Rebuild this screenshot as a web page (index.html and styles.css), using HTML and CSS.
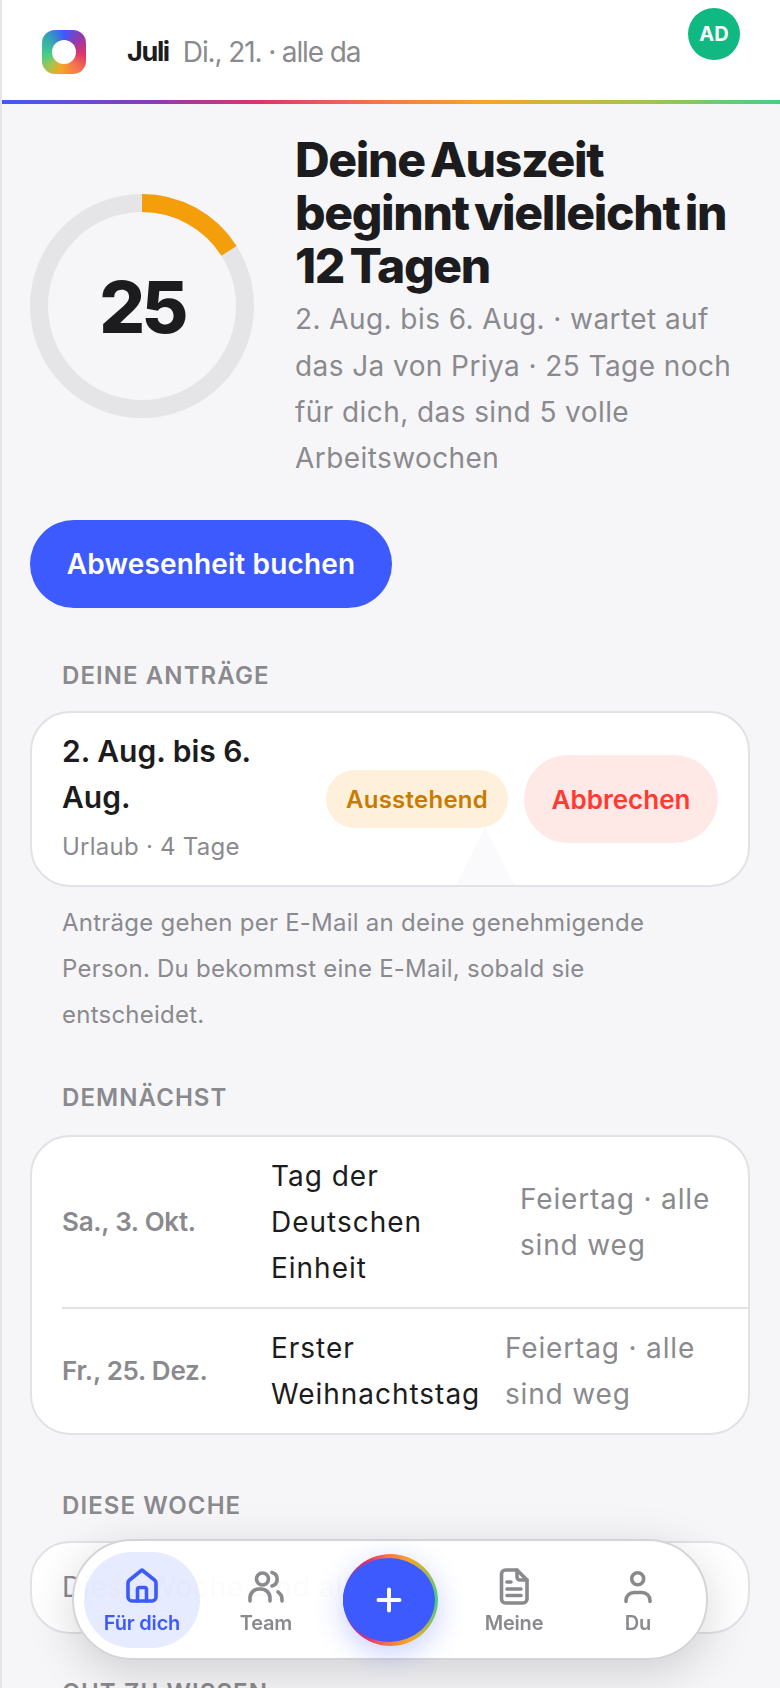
FILE: index.html
```html
<!DOCTYPE html>
<html lang="de">
<head>
<meta charset="utf-8">
<title>Für dich</title>
<link rel="stylesheet" href="styles.css">
</head>
<body>
<div class="app">
  <header class="topbar">
    <div class="logo"><span class="logo-hole"></span></div>
    <div class="crumb"><strong>Juli</strong><span>Di., 21. · alle da</span></div>
    <div class="avatar">AD</div>
  </header>
  <div class="rainbow"></div>
  <main class="content">
    <section class="hero">
      <div class="ring">
        <svg viewBox="0 0 224 224" width="224" height="224">
          <circle cx="112" cy="112" r="103" fill="none" stroke="#e5e5e7" stroke-width="18"/>
          <circle cx="112" cy="112" r="103" fill="none" stroke="#f59e0b" stroke-width="18" pathLength="100" stroke-dasharray="16 84" transform="rotate(-90 112 112)"/>
        </svg>
        <span class="ring-num">25</span>
      </div>
      <div class="hero-text">
        <h1>Deine Auszeit beginnt vielleicht in 12 Tagen</h1>
        <p>2. Aug. bis 6. Aug. · wartet auf das Ja von Priya · 25 Tage noch für dich, das sind 5 volle Arbeitswochen</p>
      </div>
    </section>
    <button class="primary">Abwesenheit buchen</button>

    <h2 class="label label-first">DEINE ANTRÄGE</h2>
    <div class="card request">
      <div class="req-text">
        <div class="req-title">2. Aug. bis 6. Aug.</div>
        <div class="req-sub">Urlaub · 4 Tage</div>
      </div>
      <span class="pill">Ausstehend</span>
      <button class="cancel">Abbrechen</button>
      <span class="ghost"></span>
    </div>
    <p class="note">Anträge gehen per E-Mail an deine genehmigende Person. Du bekommst eine E-Mail, sobald sie entscheidet.</p>

    <h2 class="label label-soon">DEMNÄCHST</h2>
    <div class="card">
      <div class="row row-a">
        <div class="date">Sa., 3. Okt.</div>
        <div class="name">Tag der Deutschen Einheit</div>
        <div class="meta">Feiertag · alle sind weg</div>
      </div>
      <div class="row row-b">
        <div class="date">Fr., 25. Dez.</div>
        <div class="name">Erster Weihnachtstag</div>
        <div class="meta">Feiertag · alle sind weg</div>
      </div>
    </div>

    <h2 class="label label-week">DIESE WOCHE</h2>
    <div class="card week">Diese Woche sind alle da.</div>

    <h2 class="label label-tips">GUT ZU WISSEN</h2>
  </main>

  <nav class="tabbar">
    <a class="tab active">
      <svg viewBox="0 0 44 44"><path d="M22 5 34.500 15q1.500 1.200 1.500 3v14a4 4 0 0 1-4 4H12a4 4 0 0 1-4-4V18q0-1.800 1.500-3z"/><path d="M17.500 36V24.500a2 2 0 0 1 2-2h5a2 2 0 0 1 2 2V36"/></svg>
      <span>Für dich</span>
    </a>
    <a class="tab">
      <svg viewBox="0 0 44 44"><circle cx="18.500" cy="14" r="6"/><path d="M6 36v-3a9 9 0 0 1 9-9h2a9 9 0 0 1 9 9v3"/><path d="M28 7.500a7 7 0 0 1 0 13.500"/><path d="M34 27a9 9 0 0 1 4 8v1"/></svg>
      <span>Team</span>
    </a>
    <div class="fab-slot">
      <button class="fab"><span class="fab-core"><svg viewBox="0 0 24 24"><path d="M12 3v18M3 12h18"/></svg></span></button>
    </div>
    <a class="tab">
      <svg viewBox="0 0 44 44"><path d="M13.500 5H25l10 10v19a4 4 0 0 1-4 4H13.500a4 4 0 0 1-4-4V9a4 4 0 0 1 4-4z"/><path d="M25 5v7a3 3 0 0 0 3 3h7"/><path d="M15 17h4M15 24h14M15 30.500h14"/></svg>
      <span>Meine</span>
    </a>
    <a class="tab">
      <svg viewBox="0 0 44 44"><circle cx="21.700" cy="13.700" r="6"/><path d="M10 36.500v-1a8 8 0 0 1 8-8h8a8 8 0 0 1 8 8v1"/></svg>
      <span>Du</span>
    </a>
  </nav>
</div>
</body>
</html>
```

FILE: styles.css
```css
* { box-sizing: border-box; }
html, body { margin: 0; padding: 0; }
body {
  background: #f6f6f9;
  font-family: "Inter", "Noto Sans", sans-serif;
  color: #1c1c1e;
}
.app {
  min-height: 100vh;
  border-left: 2px solid #e5e5e7;
}
.topbar {
  display: flex;
  align-items: flex-start;
  height: 100px;
  background: #fff;
  padding: 8px 40px 0 40px;
}
.logo {
  width: 44px;
  height: 44px;
  margin-top: 22px;
  border-radius: 13px;
  background: conic-gradient(#3d5afe 0deg, #8e3bb0 45deg, #e0336b 95deg, #f5734f 140deg, #f5a623 190deg, #a8c34f 225deg, #45cf87 260deg, #36a6b0 310deg, #3d5afe 360deg);
  display: flex;
  align-items: center;
  justify-content: center;
}
.logo-hole {
  width: 24px;
  height: 24px;
  border-radius: 50%;
  background: #fff;
}
.crumb {
  margin: 20px 0 0 41px;
  display: flex;
  gap: 14px;
  font-size: 28px;
  line-height: 48px;
  letter-spacing: -0.04em;
  flex: 1;
}
.crumb strong { font-weight: 700; color: #1c1c1e; font-size: 27px; letter-spacing: -0.05em; }
.crumb span { color: #8a8a8e; }
.avatar {
  width: 52px;
  height: 52px;
  border-radius: 50%;
  background: #10b981;
  color: #fff;
  font-size: 20px;
  font-weight: 700;
  display: flex;
  align-items: center;
  justify-content: center;
}
.rainbow {
  height: 4px;
  background: linear-gradient(90deg, #3d5afe 0%, #8e3bb0 20%, #e0336b 33%, #f5734f 48%, #f5a623 62%, #a8c34f 82%, #45cf87 100%);
}
.content { padding: 30px 30px 200px 28px; }
.hero {
  display: flex;
  align-items: flex-start;
  gap: 41px;
}
.ring {
  position: relative;
  flex: 0 0 224px;
  height: 224px;
  margin-top: 60px;
}
.ring svg { display: block; }
.ring-num {
  position: absolute;
  inset: 0;
  display: flex;
  align-items: center;
  justify-content: center;
  font-size: 72px;
  font-weight: 800;
  letter-spacing: -0.05em;
}
.hero-text { flex: 1; }
.hero-text h1 {
  margin: 0;
  font-size: 48px;
  line-height: 52.800px;
  font-weight: 800;
  letter-spacing: -0.028em;
  word-spacing: -0.08em;
}
.hero-text p {
  margin: 4px 0 0;
  font-size: 28px;
  line-height: 46.200px;
  color: #8a8a8e;
  letter-spacing: 0.015em;
}
.primary {
  display: block;
  margin-top: 39px;
  width: 362px;
  height: 88px;
  border: 0;
  border-radius: 44px;
  background: #3d5afe;
  color: #fff;
  font: 600 28px "Inter", sans-serif;
  letter-spacing: 0.005em;
}
.label {
  margin: 0;
  padding-left: 32px;
  font-size: 24px;
  line-height: 32px;
  font-weight: 600;
  letter-spacing: 0.045em;
  color: #8a8a8e;
}
.label-first { margin: 52px 0 19px; }
.label-soon { margin: 44px 0 21px; }
.label-week { margin: 55px 0 19px; }
.label-tips { margin: 43px 0 0; }
.card {
  background: #fff;
  border: 2px solid #e2e2e6;
  border-radius: 40px;
}
.request {
  position: relative;
  display: flex;
  align-items: center;
  height: 176px;
  padding: 0 30px;
}
.req-text { width: 264px; flex: none; }
.req-title {
  font-size: 30px;
  line-height: 46px;
  font-weight: 600;
}
.req-sub {
  margin-top: 4px;
  font-size: 24px;
  line-height: 46px;
  letter-spacing: 0.01em;
  color: #8a8a8e;
}
.pill {
  display: flex;
  align-items: center;
  justify-content: center;
  width: 182px;
  height: 58px;
  border-radius: 29px;
  background: #fff0dc;
  color: #c97a00;
  font-size: 24px;
  font-weight: 600;
  letter-spacing: 0.01em;
  flex: none;
}
.cancel {
  margin-left: 16px;
  width: 194px;
  height: 88px;
  border: 0;
  border-radius: 44px;
  background: #ffe9e7;
  color: #ff3b30;
  font: 600 26px "Inter", sans-serif;
  flex: none;
}
.ghost {
  position: absolute;
  left: 424px;
  bottom: 0;
  width: 0;
  height: 0;
  border-left: 29px solid transparent;
  border-right: 29px solid transparent;
  border-bottom: 58px solid #fafafd;
}
.note {
  margin: 13px 0 0;
  padding: 0 40px 0 32px;
  font-size: 24px;
  line-height: 46px;
  letter-spacing: 0.01em;
  color: #8a8a8e;
}
.row {
  display: grid;
  align-items: center;
  padding: 16px 30px 16px 0;
  margin-left: 30px;
  font-size: 28px;
  line-height: 46px;
}
.row-a { grid-template-columns: 209px 249px 1fr; }
.row-b {
  grid-template-columns: 209px 234px 1fr;
  border-top: 2px solid #e2e2e6;
}
.date { font-size: 26px; font-weight: 600; letter-spacing: -0.01em; color: #8a8a8e; }
.name { color: #1c1c1e; padding-right: 10px; letter-spacing: 0.035em; }
.meta { color: #8a8a8e; letter-spacing: 0.03em; }
.week {
  height: 93px;
  padding: 0 30px;
  font-size: 28px;
  line-height: 89px;
  letter-spacing: 0.025em;
  color: #8a8a8e;
}
.tabbar {
  position: fixed;
  left: 72px;
  bottom: 28px;
  width: 636px;
  height: 121px;
  display: flex;
  gap: 8px;
  align-items: center;
  padding: 0 10px;
  background: rgba(255,255,255,0.97);
  border: 2px solid #d4d4d8;
  border-radius: 60px;
  box-shadow: 0 12px 48px rgba(0,0,0,0.16);
}
.tab {
  flex: 0 0 116px;
  height: 96px;
  border-radius: 48px;
  display: flex;
  flex-direction: column;
  align-items: center;
  justify-content: center;
  gap: 2px;
  color: #8a8a8e;
  font-size: 20px;
  line-height: 24px;
  font-weight: 600;
  letter-spacing: -0.01em;
}
.tab svg {
  width: 44px;
  height: 44px;
  fill: none;
  stroke: currentColor;
  stroke-width: 3.600;
  stroke-linecap: round;
  stroke-linejoin: round;
}
.active { background: rgba(61,90,254,0.12); color: #3d5afe; }
.fab-slot {
  flex: 0 0 116px;
  display: flex;
  justify-content: center;
}
.fab {
  width: 95px;
  height: 92px;
  padding: 4px 3px 4px 0;
  border: 0;
  border-radius: 50%;
  background: conic-gradient(from 270deg, #3d5afe 0deg, #8e3bb0 35deg, #e0336b 60deg, #f5734f 85deg, #f5a623 115deg, #45cf87 180deg, #f5a623 245deg, #f5734f 275deg, #e0336b 300deg, #8e3bb0 325deg, #3d5afe 360deg);
  box-shadow: 0 8px 28px rgba(61,90,254,0.28);
}
.fab-core {
  display: flex;
  width: 100%;
  height: 100%;
  align-items: center;
  justify-content: center;
  border-radius: 50%;
  background: #3d5afe;
}
.fab svg {
  width: 28px;
  height: 28px;
  fill: none;
  stroke: #fff;
  stroke-width: 3.400;
  stroke-linecap: round;
}
```
